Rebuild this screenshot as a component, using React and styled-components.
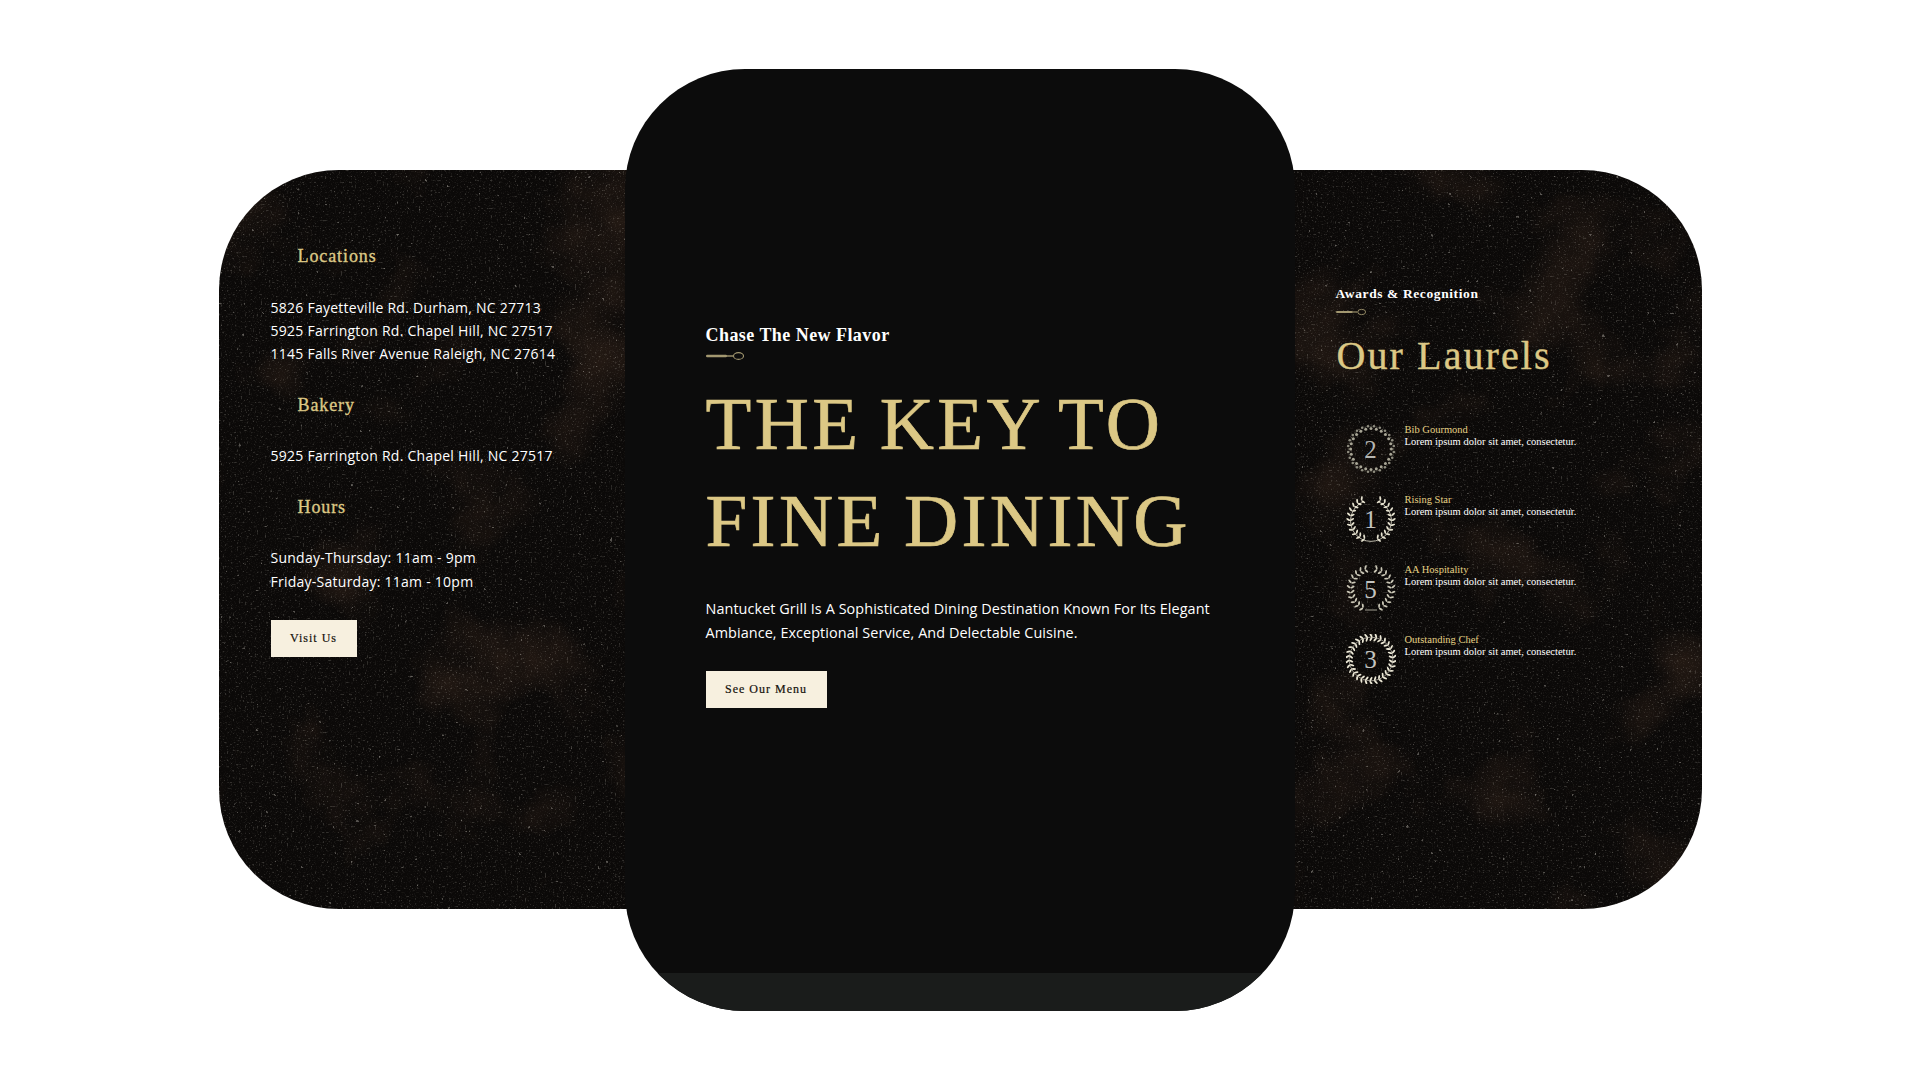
import React from 'react';
import styled, { createGlobalStyle } from 'styled-components';

const GOLD = '#dcc885';
const SERIF = '"Liberation Serif", "Times New Roman", serif';

const grain = (w, h, seed) => {
  const svg = `<svg xmlns="http://www.w3.org/2000/svg" width="${w}" height="${h}">
    <filter id="c" x="0" y="0" width="100%" height="100%"><feTurbulence type="fractalNoise" baseFrequency="0.009" numOctaves="4" seed="${seed}"/>
      <feColorMatrix values="0 0 0 0 0.32 0 0 0 0 0.14 0 0 0 0 0.07 2.4 0 0 0 -1.25"/></filter>
    <filter id="s" x="0" y="0" width="100%" height="100%"><feTurbulence type="fractalNoise" baseFrequency="0.5" numOctaves="2" seed="${seed + 3}"/>
      <feColorMatrix values="0 0 0 0 0.9 0 0 0 0 0.86 0 0 0 0 0.76 0 11 0 0 -7.2"/></filter>
    <filter id="d" x="0" y="0" width="100%" height="100%"><feTurbulence type="fractalNoise" baseFrequency="0.8" numOctaves="1" seed="${seed + 7}"/>
      <feColorMatrix values="0 0 0 0 0.55 0 0 0 0 0.5 0 0 0 0 0.44 0 0 6 0 -3.2"/></filter>
    <filter id="b" x="0" y="0" width="100%" height="100%"><feTurbulence type="fractalNoise" baseFrequency="0.22" numOctaves="2" seed="${seed + 9}"/>
      <feColorMatrix values="0 0 0 0 1 0 0 0 0 0.96 0 0 0 0 0.86 24 0 0 0 -19"/></filter>
    <rect width="100%" height="100%" filter="url(#c)" opacity="0.2"/>
    <rect width="100%" height="100%" filter="url(#d)" opacity="0.06"/>
    <rect width="100%" height="100%" filter="url(#s)" opacity="0.17"/>
    <rect width="100%" height="100%" filter="url(#b)" opacity="0.3"/>
  </svg>`;
  return `url("data:image/svg+xml,${encodeURIComponent(svg)}")`;
};

const Global = createGlobalStyle`
  html, body { margin: 0; padding: 0; background: #fff; }
  * { box-sizing: border-box; }
`;

const Page = styled.div`
  width: 100%;
  height: 1080px;
  display: flex;
  align-items: center;
  justify-content: center;
  overflow: hidden;
`;

const SidePanel = styled.section`
  width: ${p => p.$width}px;
  height: 739px;
  margin-top: -1px;
  flex: none;
  border-radius: 120px;
  background-color: #0b0908;
  background-image: ${p => grain(p.$width, 739, p.$seed)};
  color: #fff;
`;

const LeftPanel = styled(SidePanel)`
  margin-right: -134px;
  padding: 74px 0 0 52px;
`;

const RightPanel = styled(SidePanel)`
  margin-left: -134px;
  padding: 115px 0 0 175px;
`;

const CenterCard = styled.main`
  position: relative;
  z-index: 1;
  width: 670px;
  height: 942px;
  flex: none;
  border-radius: 120px;
  overflow: hidden;
  background: #0c0c0c;
  display: flex;
  flex-direction: column;
  color: #fff;
`;

const CenterBody = styled.div`
  flex: 1;
  padding: 255px 0 0 81px;
`;

const CardFoot = styled.div`
  height: 38px;
  background: #1a1c1b;
`;

const SectionTitle = styled.h4`
  margin: 0 0 27.6px 27px;
  font: 400 18px/24px ${SERIF};
  letter-spacing: 0.9px;
  -webkit-text-stroke: 0.35px ${GOLD};
  color: ${GOLD};
`;

const BodyText = styled.p`
  margin: 0 0 27px;
  font: 400 14px/23.4px "Open Sans", sans-serif;
  letter-spacing: 0.25px;
  color: #fff;
`;

const Eyebrow = styled.div`
  font: 700 ${p => p.$size}px/${p => p.$line}px ${SERIF};
  letter-spacing: ${p => p.$track}px;
  color: #fff;
`;

const SpoonMark = styled.svg`
  display: block;
  margin-top: 6px;
  width: ${p => p.$w}px;
  height: 8px;
`;

const Hero = styled.h1`
  margin: 15px 0 28px;
  font: 400 75px/97px ${SERIF};
  letter-spacing: 3.4px;
  word-spacing: -4px;
  -webkit-text-stroke: 0.7px ${GOLD};
  color: ${GOLD};
  white-space: nowrap;
`;

const Lead = styled(BodyText)`
  font-size: 14.4px;
  line-height: 24px;
  letter-spacing: 0.08px;
  margin-bottom: 26px;
`;

const CtaButton = styled.a`
  display: inline-flex;
  align-items: center;
  justify-content: center;
  width: ${p => p.$w}px;
  height: 37px;
  background: #f7f0df;
  color: #14110b;
  font: 400 12px ${SERIF};
  letter-spacing: 1px;
  -webkit-text-stroke: 0.2px #14110b;
`;

const LaurelHeading = styled.h2`
  margin: 13px 0 41px 1px;
  font: 400 40px/54px ${SERIF};
  letter-spacing: 2.1px;
  -webkit-text-stroke: 0.4px ${GOLD};
  color: ${GOLD};
`;

const AwardList = styled.ul`
  list-style: none;
  margin: 0 0 0 10px;
  padding: 0;
  display: flex;
  flex-direction: column;
  gap: 20px;
`;

const AwardRow = styled.li`
  display: flex;
  gap: 9px;
  height: 50px;
`;

const Wreath = styled.div`
  width: 50px;
  height: 50px;
  display: grid;
  place-items: center;
  flex: none;
  & > * { grid-area: 1 / 1; }
`;

const WreathNumber = styled.span`
  font: 400 25px/1 ${SERIF};
  color: ${p => p.$dim ? '#b5b5b0' : '#c4c4c0'};
`;

const AwardTitle = styled.div`
  font: 400 10.5px/12px ${SERIF};
  color: #e6d184;
`;

const AwardText = styled.div`
  font: 400 10.5px/12px ${SERIF};
  color: #fff;
  white-space: nowrap;
`;

const Spoon = ({ w }) => (
  <SpoonMark $w={w} viewBox="0 0 38 8">
    <rect x="0" y="2.8" width="21" height="2.4" rx="1.2" fill="#a39870" />
    <rect x="20" y="3.3" width="7" height="1.4" fill="#a39870" />
    <ellipse cx="32.5" cy="4" rx="5" ry="3.4" fill="none" stroke="#a39870" strokeWidth="1.1" />
  </SpoonMark>
);

const polar = (r, deg) => {
  const a = (deg - 90) * Math.PI / 180;
  return [25 + r * Math.cos(a), 25 + r * Math.sin(a)];
};

const leaves = (from, to, step, side, r, color) => {
  const out = [];
  for (let d = from; d <= to; d += step) {
    const deg = side * d;
    const [ox, oy] = polar(r + 1.9, deg);
    const [ix, iy] = polar(r - 1.9, deg);
    const tilt = deg + (side > 0 ? 0 : 180);
    out.push(<ellipse key={`o${side}${d}`} cx={ox} cy={oy} rx="2.3" ry="0.95" fill={color} transform={`rotate(${tilt + side * 58} ${ox} ${oy})`} />);
    out.push(<ellipse key={`i${side}${d}`} cx={ix} cy={iy} rx="2.3" ry="0.95" fill={color} transform={`rotate(${tilt - side * 58} ${ix} ${iy})`} />);
  }
  return out;
};

const LaurelIcon = ({ kind }) => {
  if (kind === 'dots') {
    const dots = [];
    for (let d = 0; d < 360; d += 15) {
      const [x, y] = polar(20.4, d);
      const [x2, y2] = polar(23, d + 7.5);
      const [x3, y3] = polar(22.6, d);
      dots.push(<circle key={d} cx={x} cy={y} r="1.5" fill="#a8a595" />);
      dots.push(<circle key={`o${d}`} cx={x2} cy={y2} r="1.3" fill="#8f8d7f" />);
      dots.push(<circle key={`m${d}`} cx={x3} cy={y3} r="0.7" fill="#5f5d52" />);
    }
    return <svg width="50" height="50" viewBox="0 0 50 50">{dots}</svg>;
  }
  if (kind === 'open') {
    const c = '#e6e2cf';
    return (
      <svg width="50" height="50" viewBox="0 0 50 50">
        <path d="M17 8 A20.5 20.5 0 1 0 33 8" fill="none" stroke={c} strokeWidth="0.8" />
        {leaves(24, 172, 13.5, 1, 20.8, c)}
        {leaves(24, 172, 13.5, -1, 20.8, c)}
      </svg>
    );
  }
  if (kind === 'tied') {
    const c = '#c9c6b5';
    return (
      <svg width="50" height="50" viewBox="0 0 50 50">
        <path d="M19 46 H31" stroke={c} strokeWidth="0.8" />
        {leaves(14, 160, 14, 1, 20.5, c)}
        {leaves(14, 160, 14, -1, 20.5, c)}
      </svg>
    );
  }
  const c = '#ece8d6';
  return (
    <svg width="50" height="50" viewBox="0 0 50 50">
      <circle cx="25" cy="25" r="21.8" fill="none" stroke={c} strokeWidth="0.6" />
      {leaves(0, 348, 12, 1, 21.8, c)}
    </svg>
  );
};

const awards = [
  { title: 'Bib Gourmond', n: 2, kind: 'dots' },
  { title: 'Rising Star', n: 1, kind: 'open' },
  { title: 'AA Hospitality', n: 5, kind: 'tied' },
  { title: 'Outstanding Chef', n: 3, kind: 'full' },
];

const App = () => (
  <Page>
    <Global />
    <LeftPanel $width={540} $seed={4}>
      <SectionTitle>Locations</SectionTitle>
      <BodyText>
        5826 Fayetteville Rd. Durham, NC 27713<br />
        5925 Farrington Rd. Chapel Hill, NC 27517<br />
        1145 Falls River Avenue Raleigh, NC 27614
      </BodyText>
      <SectionTitle>Bakery</SectionTitle>
      <BodyText>5925 Farrington Rd. Chapel Hill, NC 27517</BodyText>
      <SectionTitle>Hours</SectionTitle>
      <BodyText>
        Sunday-Thursday: 11am - 9pm<br />
        Friday-Saturday: 11am - 10pm
      </BodyText>
      <CtaButton $w={86}>Visit Us</CtaButton>
    </LeftPanel>
    <CenterCard>
      <CenterBody>
        <Eyebrow $size={18} $line={22} $track={0.45}>Chase The New Flavor</Eyebrow>
        <Spoon w={38} />
        <Hero>THE KEY TO<br />FINE DINING</Hero>
        <Lead>
          Nantucket Grill Is A Sophisticated Dining Destination Known For Its Elegant<br />
          Ambiance, Exceptional Service, And Delectable Cuisine.
        </Lead>
        <CtaButton $w={121}>See Our Menu</CtaButton>
      </CenterBody>
      <CardFoot />
    </CenterCard>
    <RightPanel $width={541} $seed={11}>
      <Eyebrow $size={13.5} $line={17} $track={0.6}>Awards &amp; Recognition</Eyebrow>
      <Spoon w={30} />
      <LaurelHeading>Our Laurels</LaurelHeading>
      <AwardList>
        {awards.map(a => (
          <AwardRow key={a.title}>
            <Wreath>
              <LaurelIcon kind={a.kind} />
              <WreathNumber $dim={a.kind === 'dots'}>{a.n}</WreathNumber>
            </Wreath>
            <div>
              <AwardTitle>{a.title}</AwardTitle>
              <AwardText>Lorem ipsum dolor sit amet, consectetur.</AwardText>
            </div>
          </AwardRow>
        ))}
      </AwardList>
    </RightPanel>
  </Page>
);

export default App;
